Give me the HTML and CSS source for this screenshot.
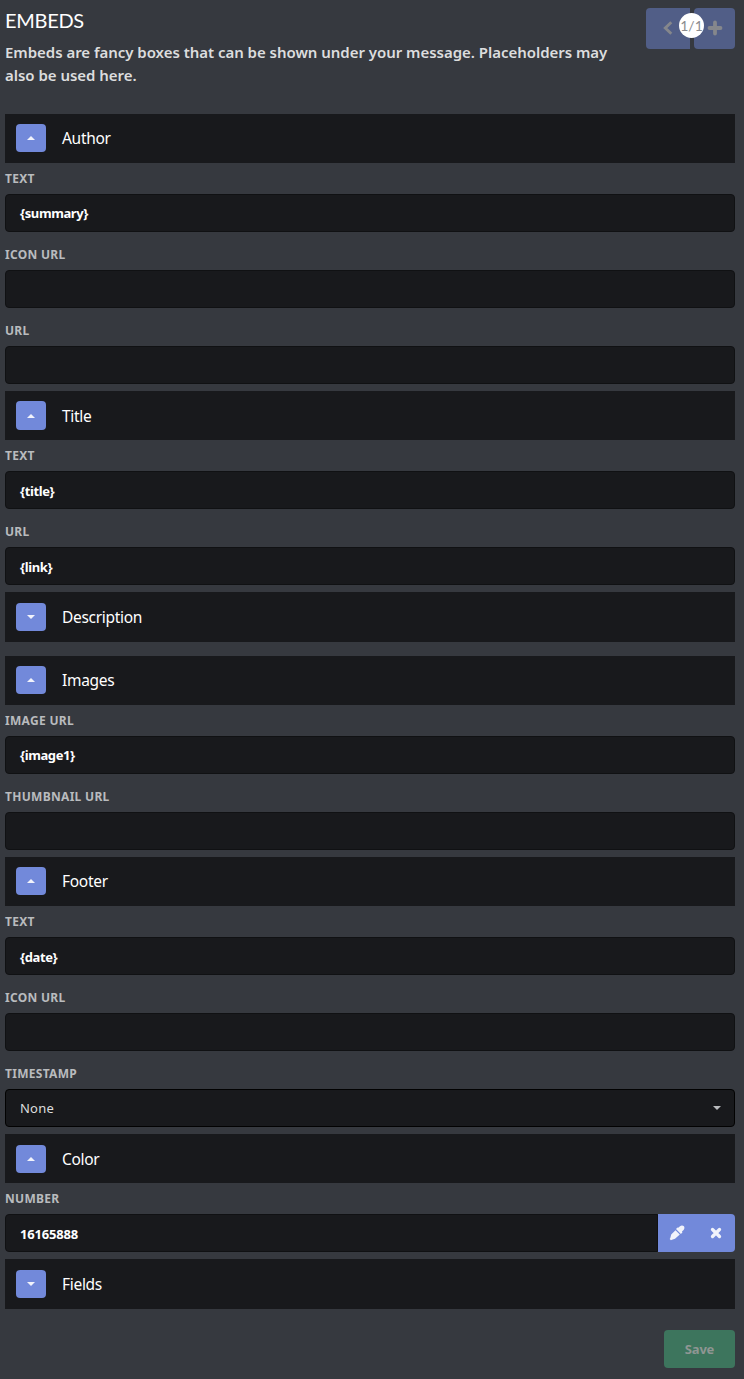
FILE: index.html
```html
<!DOCTYPE html>
<html lang="en">
<head>
<meta charset="utf-8">
<title>Embeds</title>
<link rel="stylesheet" href="styles.css">
</head>
<body>
<main class="page">
  <header class="header">
    <div class="intro">
      <h1 class="heading">EMBEDS</h1>
      <p class="lead">Embeds are fancy boxes that can be shown under your message. Placeholders may<br>also be used here.</p>
    </div>
    <div class="pager">
      <button class="pager-btn prev" aria-label="Previous"><svg width="10" height="14" viewBox="0 0 10 14"><path d="M8.300 1.300 2.300 7 8.300 12.700" fill="none" stroke="currentColor" stroke-width="2.900"/></svg></button>
      <button class="pager-btn next" aria-label="Add"><svg width="16" height="16" viewBox="0 0 16 16"><path d="M8 2.500v11M2.500 8h11" fill="none" stroke="currentColor" stroke-width="3.800" stroke-linecap="round"/></svg></button>
      <span class="count">1/1</span>
    </div>
  </header>

  <section>
    <div class="bar raised"><button class="toggle" aria-label="Collapse"><i class="caret up"></i></button><span class="bar-title">Author</span></div>
    <div class="field"><label class="label">TEXT</label><div class="input">{summary}</div></div>
    <div class="field"><label class="label">ICON URL</label><div class="input"></div></div>
    <div class="field"><label class="label">URL</label><div class="input"></div></div>
  </section>
  <section>
    <div class="bar"><button class="toggle tall" aria-label="Collapse"><i class="caret up"></i></button><span class="bar-title">Title</span></div>
    <div class="field"><label class="label">TEXT</label><div class="input lowered">{title}</div></div>
    <div class="field"><label class="label">URL</label><div class="input lowered">{link}</div></div>
  </section>
  <section>
    <div class="bar closed"><button class="toggle" aria-label="Expand"><i class="caret down"></i></button><span class="bar-title">Description</span></div>
  </section>
  <section>
    <div class="bar raised"><button class="toggle" aria-label="Collapse"><i class="caret up"></i></button><span class="bar-title">Images</span></div>
    <div class="field"><label class="label">IMAGE URL</label><div class="input">{image1}</div></div>
    <div class="field"><label class="label">THUMBNAIL URL</label><div class="input"></div></div>
  </section>
  <section>
    <div class="bar raised"><button class="toggle" aria-label="Collapse"><i class="caret up"></i></button><span class="bar-title">Footer</span></div>
    <div class="field"><label class="label">TEXT</label><div class="input lowered">{date}</div></div>
    <div class="field"><label class="label">ICON URL</label><div class="input"></div></div>
    <div class="field"><label class="label">TIMESTAMP</label><div class="input select"><span>None</span><i class="caret down"></i></div></div>
  </section>
  <section>
    <div class="bar"><button class="toggle" aria-label="Collapse"><i class="caret up"></i></button><span class="bar-title">Color</span></div>
    <div class="field"><label class="label">NUMBER</label>
      <div class="group">
        <div class="input number lowered">16165888</div>
        <div class="actions">
          <button class="action" aria-label="Pick color"><svg width="16" height="16" viewBox="0 0 16 16"><path d="M9.200 2.800 11 1.200C12.200.2 14 .3 14.900 1.300 15.700 2.300 15.600 3.800 14.600 4.900L13 6.600 13.400 7.400 11.900 8.900 7 4 8.500 2.500Z" fill="currentColor"/><path d="M6.500 5.200 10.800 9.500 6 13.700 3 14.700 1.900 15.300.7 14.100 1.300 13 2.200 9.500Z" fill="currentColor"/></svg></button>
          <button class="action" aria-label="Clear"><svg width="12" height="12" viewBox="0 0 12 12"><path d="M2.500 2.500 9.500 9.500M9.500 2.500 2.500 9.500" fill="none" stroke="currentColor" stroke-width="3.300" stroke-linecap="round"/></svg></button>
        </div>
      </div>
    </div>
  </section>
  <section>
    <div class="bar closed"><button class="toggle" aria-label="Expand"><i class="caret down"></i></button><span class="bar-title">Fields</span></div>
  </section>
  <footer class="footer"><button class="save">Save</button></footer>
</main>
</body>
</html>
```
FILE: styles.css
```css
* { box-sizing: border-box; }
body {
  margin: 0;
  min-height: 1379px;
  background: #36393f;
  color: #fff;
  font-family: "Segoe UI", "Noto Sans", "Open Sans", sans-serif;
}
button { border: 0; padding: 0; font-family: inherit; }
svg { display: block; }
.page { padding: 8px 9px 0 5px; }
.header { display: flex; justify-content: space-between; height: 106px; }
.heading { margin: 0; font: 400 20px/24px Lato, sans-serif; letter-spacing: -0.3px; }
.lead { margin: 9px 0 0; font-size: 15px; line-height: 23px; font-weight: 600; color: #dcddde; white-space: nowrap; letter-spacing: -0.03px; }
.pager { position: relative; display: flex; gap: 4px; width: 89px; height: 41px; flex: none; }
.pager-btn { display: flex; align-items: center; justify-content: center; padding-bottom: 1px; background: #515e87; color: #85878c; }
.prev { width: 44px; border-radius: 4px 0 0 4px; }
.next { width: 41px; border-radius: 4px; }
.count {
  position: absolute; left: 33px; top: 5px; width: 25px; height: 25px;
  border-radius: 50%; background: #fff; color: #8b8c8f;
  font: 400 14px/25px Lato, sans-serif; text-align: center;
}
.bar { display: flex; align-items: center; height: 49px; padding-left: 11px; background: #18191c; }
.raised { padding-bottom: 1px; }
.closed { height: 50px; margin-bottom: 14px; }
.toggle { display: flex; align-items: center; justify-content: center; width: 30px; height: 28px; border-radius: 4px; background: #7289da; color: #f1f3fb; }
.tall { height: 29px; }
.caret { width: 0; height: 0; border: 4px solid transparent; }
.up { border-top: 0; border-bottom-color: currentColor; }
.down { border-bottom: 0; border-top-color: currentColor; }
.bar-title { margin-left: 16px; font-size: 15.5px; letter-spacing: -0.3px; }
.field { padding-bottom: 7px; }
.label { display: block; height: 31px; font-size: 12px; line-height: 31px; font-weight: 700; letter-spacing: 0.3px; color: #b9bbbe; }
.input { display: flex; align-items: center; height: 38px; padding: 0 14px; border: 1px solid #101113; border-radius: 4px; background: #18191c; font-size: 13px; font-weight: 700; letter-spacing: -0.4px; }
.lowered { padding-top: 1px; }
.select { justify-content: space-between; padding-right: 13px; border-color: #020202; color: #dcddde; font-weight: 400; letter-spacing: 0.2px; }
.select .caret { color: #b9bbbe; }
.group { display: flex; }
.number { flex: 1; border-radius: 4px 0 0 4px; letter-spacing: -0.18px; }
.actions { display: flex; width: 77px; background: #7289da; border-radius: 0 4px 4px 0; }
.action { flex: 1; display: flex; align-items: center; justify-content: center; background: none; color: #f1f3fb; }
.footer { display: flex; justify-content: flex-end; padding-top: 7px; }
.save { width: 71px; height: 38px; border-radius: 4px; background: #3d755d; color: #8f9693; font-size: 13px; font-weight: 700; letter-spacing: -0.2px; }
```
